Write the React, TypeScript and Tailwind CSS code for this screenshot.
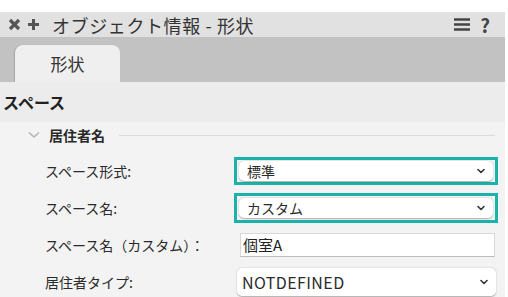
import React from "react";

const font = { fontFamily: '"Noto Sans CJK JP", "Noto Sans", sans-serif' };

function Chevron() {
  return (
    <svg width="8" height="6" viewBox="0 0 8 6" className="shrink-0">
      <path d="M1 1.5 L4 4.5 L7 1.5" fill="none" stroke="#333" strokeWidth="1.6" strokeLinecap="round" strokeLinejoin="round" />
    </svg>
  );
}

function SelectBox({ value }: { value: string }) {
  return (
    <div className="flex h-full w-full items-center justify-between rounded-[5px] bg-white pl-[8px] pr-[8px] text-[14px] text-[#2b2b2b] shadow-[0_0.5px_1.5px_rgba(0,0,0,0.3)]">
      <span>{value}</span>
      <Chevron />
    </div>
  );
}

function Row({ label, children, className }: { label: string; children: React.ReactNode; className: string }) {
  return (
    <div className={"flex items-center " + className}>
      <div className="w-[234px] shrink-0 whitespace-nowrap pl-[45px] text-[14px] text-[#2a2a2a]">{label}</div>
      {children}
    </div>
  );
}

export default function App() {
  return (
    <div className="h-[297px] w-[508px] overflow-hidden bg-white pt-[12px]" style={font}>
      <div className="flex h-[285px] w-[505px] flex-col">
        {/* title bar */}
        <div className="flex h-[25px] shrink-0 items-center bg-[#e1e1e1] pl-[8px] pr-[15px] text-[#333]">
          <svg width="13" height="13" viewBox="0 0 13 13" className="shrink-0">
            <path d="M2 2 L11 11 M11 2 L2 11" stroke="#555" strokeWidth="3.2" />
          </svg>
          <svg width="13" height="13" viewBox="0 0 13 13" className="ml-[6px] shrink-0">
            <path d="M6.5 1 V12 M1 6.5 H12" stroke="#555" strokeWidth="3" />
          </svg>
          <span className="ml-[12px] text-[18px] leading-none tracking-[0.6px]">オブジェクト情報 - 形状</span>
          <svg width="16" height="13" viewBox="0 0 16 13" className="ml-auto shrink-0">
            <path d="M0 1.5 H16 M0 6.5 H16 M0 11.5 H16" stroke="#444" strokeWidth="2.6" />
          </svg>
          <span className="ml-[10px] text-[19px] font-bold leading-none text-[#444]">?</span>
        </div>
        {/* tab bar */}
        <div className="flex h-[45px] shrink-0 items-end bg-[#c2c2c2] pl-[15px]">
          <div className="flex h-[37px] w-[105px] items-center justify-center rounded-t-[8px] bg-[#efefef] text-[17px] text-[#333] shadow-[-1px_0_1px_rgba(0,0,0,0.15)]">
            形状
          </div>
        </div>
        {/* section header */}
        <div className="flex h-[40px] shrink-0 items-center bg-[#ececec] pl-[3px] text-[16px] font-bold text-[#222]">
          スペース
        </div>
        {/* content */}
        <div className="flex flex-1 flex-col bg-[#f3f3f3]">
          <div className="flex h-[26px] shrink-0 items-center pl-[28px]">
            <svg width="12" height="8" viewBox="0 0 12 8">
              <path d="M1 1.5 L6 6 L11 1.5" fill="none" stroke="#b5b5b5" strokeWidth="1.6" />
            </svg>
            <span className="ml-[9px] text-[14px] font-bold text-[#2a2a2a]">居住者名</span>
            <div className="ml-[14px] mr-[10px] h-px flex-1 bg-[#dcdcdc]" />
          </div>
          <Row label="スペース形式:" className="mt-[9px] h-[28px]">
            <div className="h-[28px] w-[264px] border-[3px] border-[#1bb3a9] px-[2px] py-[1px]">
              <SelectBox value="標準" />
            </div>
          </Row>
          <Row label="スペース名:" className="mt-[8px] h-[30px]">
            <div className="h-[30px] w-[264px] border-[3px] border-[#1bb3a9] px-[2px] py-[2px]">
              <SelectBox value="カスタム" />
            </div>
          </Row>
          <Row label="スペース名（カスタム）：" className="mt-[10px] h-[24px]">
            <div className="ml-[6px] flex h-[24px] w-[255px] items-center border border-[#d8d8d8] border-b-[#bdbdbd] bg-white pl-[2px] text-[15px] text-[#222]">
              個室A
            </div>
          </Row>
          <Row label="居住者タイプ:" className="mt-[11px] h-[28px]">
            <div className="ml-[3px] h-[28px] w-[259px]">
              <div className="flex h-full w-full items-center justify-between rounded-[5px] bg-white pl-[5px] pr-[8px] text-[16px] tracking-[0.4px] text-[#2b2b2b] shadow-[0_0.5px_1.5px_rgba(0,0,0,0.3)]">
                <span>NOTDEFINED</span>
                <Chevron />
              </div>
            </div>
          </Row>
        </div>
      </div>
    </div>
  );
}
